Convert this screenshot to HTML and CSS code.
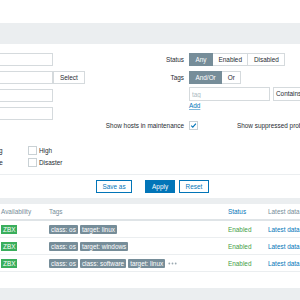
FILE: index.html
```html
<!DOCTYPE html>
<html lang="en">
<head>
<meta charset="utf-8">
<title>Hosts</title>
<link rel="stylesheet" href="styles.css">
</head>
<body>
<div class="header"></div>
<div class="band band-top"></div>
<section class="filter">
  <div class="filter-body">
    <div class="col-left">
      <input class="text-input" type="text">
      <div class="input-row">
        <input class="text-input" type="text">
        <button class="btn-grey" type="button">Select</button>
      </div>
      <input class="text-input" type="text">
      <input class="text-input" type="text">
      <div class="severity">
        <label class="check"><span class="box"></span>Warning</label>
        <label class="check"><span class="box"></span>High</label>
        <label class="check"><span class="box"></span>Average</label>
        <label class="check"><span class="box"></span>Disaster</label>
      </div>
    </div>
    <div class="col-right">
      <div class="row row-status">
        <span class="lbl">Status</span>
        <div class="seg"><span class="on">Any</span><span>Enabled</span><span>Disabled</span></div>
      </div>
      <div class="row row-tags">
        <span class="lbl">Tags</span>
        <div class="seg"><span class="on">And/Or</span><span>Or</span></div>
      </div>
      <div class="row row-tag-input">
        <input class="tag-input" type="text" placeholder="tag">
        <div class="select-box">Contains</div>
      </div>
      <div class="row row-add">
        <a class="link" href="#">Add</a>
      </div>
      <div class="row row-maint">
        <span class="lbl">Show hosts in maintenance</span>
        <span class="box checked"><svg width="7" height="7" viewBox="0 0 7 7"><path d="M1.2 3.6 L2.8 5.2 L5.9 1.6" fill="none" stroke="#0275b8" stroke-width="1.1"/></svg></span>
        <span class="lbl-2">Show suppressed problems</span>
      </div>
    </div>
  </div>
  <div class="filter-foot">
    <button class="btn btn-alt btn-save" type="button">Save as</button>
    <button class="btn btn-main" type="button">Apply</button>
    <button class="btn btn-alt" type="button">Reset</button>
  </div>
</section>
<div class="band band-mid"></div>
<section class="list">
  <table>
    <colgroup><col class="c1"><col class="c2"><col class="c3"><col class="c4"></colgroup>
    <thead>
      <tr><th>Availability</th><th>Tags</th><th><a class="sort" href="#">Status</a></th><th>Latest data</th></tr>
    </thead>
    <tbody>
      <tr>
        <td><div class="cell"><span class="zbx">ZBX</span></div></td>
        <td><div class="cell tags"><span class="tag">class: os</span><span class="tag">target: linux</span></div></td>
        <td><div class="cell"><span class="enabled">Enabled</span></div></td>
        <td><div class="cell"><a class="link-plain" href="#">Latest data</a></div></td>
      </tr>
      <tr>
        <td><div class="cell"><span class="zbx">ZBX</span></div></td>
        <td><div class="cell tags"><span class="tag">class: os</span><span class="tag">target: windows</span></div></td>
        <td><div class="cell"><span class="enabled">Enabled</span></div></td>
        <td><div class="cell"><a class="link-plain" href="#">Latest data</a></div></td>
      </tr>
      <tr>
        <td><div class="cell"><span class="zbx">ZBX</span></div></td>
        <td><div class="cell tags"><span class="tag">class: os</span><span class="tag">class: software</span><span class="tag">target: linux</span><svg class="more" width="9" height="3" viewBox="0 0 9 3"><circle cx="1.3" cy="1.5" r="0.9"/><circle cx="4.5" cy="1.5" r="0.9"/><circle cx="7.7" cy="1.5" r="0.9"/></svg></div></td>
        <td><div class="cell"><span class="enabled">Enabled</span></div></td>
        <td><div class="cell"><a class="link-plain" href="#">Latest data</a></div></td>
      </tr>
    </tbody>
  </table>
</section>
<div class="band band-bottom"></div>
</body>
</html>
```
FILE: styles.css
```css
html, body {
  margin: 0;
  padding: 0;
  height: 100%;
  overflow: hidden;
  background: #ebeef0;
}
body {
  font-family: "Liberation Sans", Arial, sans-serif;
  font-size: 6.4px;
  color: #1f2c33;
}
.header {
  height: 23px;
  background: #fff;
}
.band-top { height: 21px; }
.band-mid { height: 6px; }

.filter {
  background: #fff;
  padding-top: 9px;
}
.filter-body {
  display: flex;
  align-items: flex-start;
}
.col-left {
  flex: none;
  width: 120px;
  margin-left: -20px;
  display: flex;
  flex-direction: column;
  gap: 5px;
}
.text-input {
  display: block;
  width: 73px;
  height: 13px;
  box-sizing: border-box;
  border: 1px solid #d5dadd;
  padding: 0 2px;
  margin: 0;
  font: inherit;
  background: #fff;
  outline: none;
}
.input-row {
  display: flex;
}
.btn-grey {
  height: 13px;
  box-sizing: border-box;
  border: 1px solid #d5dadd;
  background: #fff;
  color: #1f2c33;
  padding: 0 6px;
  margin: 0;
  font: inherit;
}
.severity {
  display: grid;
  grid-template-columns: 60px 60px;
  row-gap: 3px;
  margin-left: -12px;
  margin-top: 21px;
}
.check {
  display: flex;
  align-items: center;
  gap: 2px;
  height: 9px;
  white-space: nowrap;
}
.box {
  flex: none;
  width: 9px;
  height: 9px;
  box-sizing: border-box;
  border: 1px solid #c9d1d5;
  background: #fff;
  display: flex;
  align-items: center;
  justify-content: center;
}

.col-right {
  flex: none;
  display: flex;
  flex-direction: column;
}
.row {
  display: flex;
  align-items: center;
  white-space: nowrap;
}
.lbl {
  flex: none;
  width: 89px;
  padding-right: 5px;
  box-sizing: border-box;
  text-align: right;
  white-space: nowrap;
}
.seg {
  display: flex;
}
.seg span {
  height: 13px;
  box-sizing: border-box;
  border: 1px solid #d5dadd;
  padding: 0 5.5px;
  line-height: 11px;
  margin-left: -1px;
  background: #fff;
}
.seg span:first-child { margin-left: 0; }
.seg span.on {
  background: #768d99;
  border-color: #768d99;
  color: #fff;
  position: relative;
}
.row-tags { margin-top: 5px; }
.row-tag-input {
  margin-top: 3px;
  padding-left: 89px;
}
.tag-input {
  width: 81px;
  height: 14px;
  box-sizing: border-box;
  border: 1px solid #d5dadd;
  padding: 0 2px;
  margin: 0;
  font: inherit;
  outline: none;
}
.tag-input::placeholder { color: #acbbc2; }
.select-box {
  margin-left: 3px;
  width: 50px;
  height: 14px;
  box-sizing: border-box;
  border: 1px solid #d5dadd;
  padding-left: 2px;
  line-height: 12px;
}
.row-add {
  margin-top: 1px;
  padding-left: 89px;
  height: 8px;
  line-height: 8px;
}
.link {
  color: #0275b8;
  text-decoration: underline;
  text-decoration-color: #7fb8dc;
  text-underline-offset: 1px;
}
.row-maint {
  margin-top: 11px;
  height: 9px;
}
.lbl-2 {
  margin-left: 39px;
}

.filter-foot {
  margin-top: 7px;
  border-top: 1px solid #ebeef0;
  padding: 5px 0 5px 96px;
  display: flex;
  gap: 4px;
}
.btn {
  height: 13px;
  box-sizing: border-box;
  padding: 0 5.5px;
  margin: 0;
  font: inherit;
  border: 1px solid #0275b8;
}
.btn-alt {
  background: #fff;
  color: #0275b8;
}
.btn-main {
  background: #0275b8;
  color: #fff;
  padding: 0 6px;
}
.btn-save { margin-right: 9px; }

.list {
  background: #fff;
  padding-bottom: 16px;
}
table {
  border-collapse: separate;
  border-spacing: 0;
  table-layout: fixed;
  width: 400px;
  margin-left: -2px;
}
col.c1 { width: 48px; }
col.c2 { width: 179px; }
col.c3 { width: 40px; }
col.c4 { width: 133px; }
th {
  text-align: left;
  font-weight: normal;
  color: #768d99;
  line-height: 15px;
  padding: 0 3px;
  border-bottom: 2px solid #dfe4e7;
  white-space: nowrap;
}
.sort {
  color: #0275b8;
  text-decoration: none;
}
td {
  padding: 0 3px;
  border-bottom: 1px solid #ebeef0;
  white-space: nowrap;
}
.cell {
  height: 16px;
  display: flex;
  align-items: center;
}
.tags { gap: 2px; }
.zbx {
  background: #3aae5c;
  color: #fff;
  line-height: 9px;
  padding: 0 2px;
}
.tag {
  background: #768d99;
  color: #fff;
  line-height: 9px;
  padding: 0 2px;
  border-radius: 1px;
}
.more {
  margin-left: 1px;
  fill: #9aa8b0;
}
.enabled { color: #429e47; }
.link-plain {
  color: #0275b8;
  text-decoration: none;
}
```
